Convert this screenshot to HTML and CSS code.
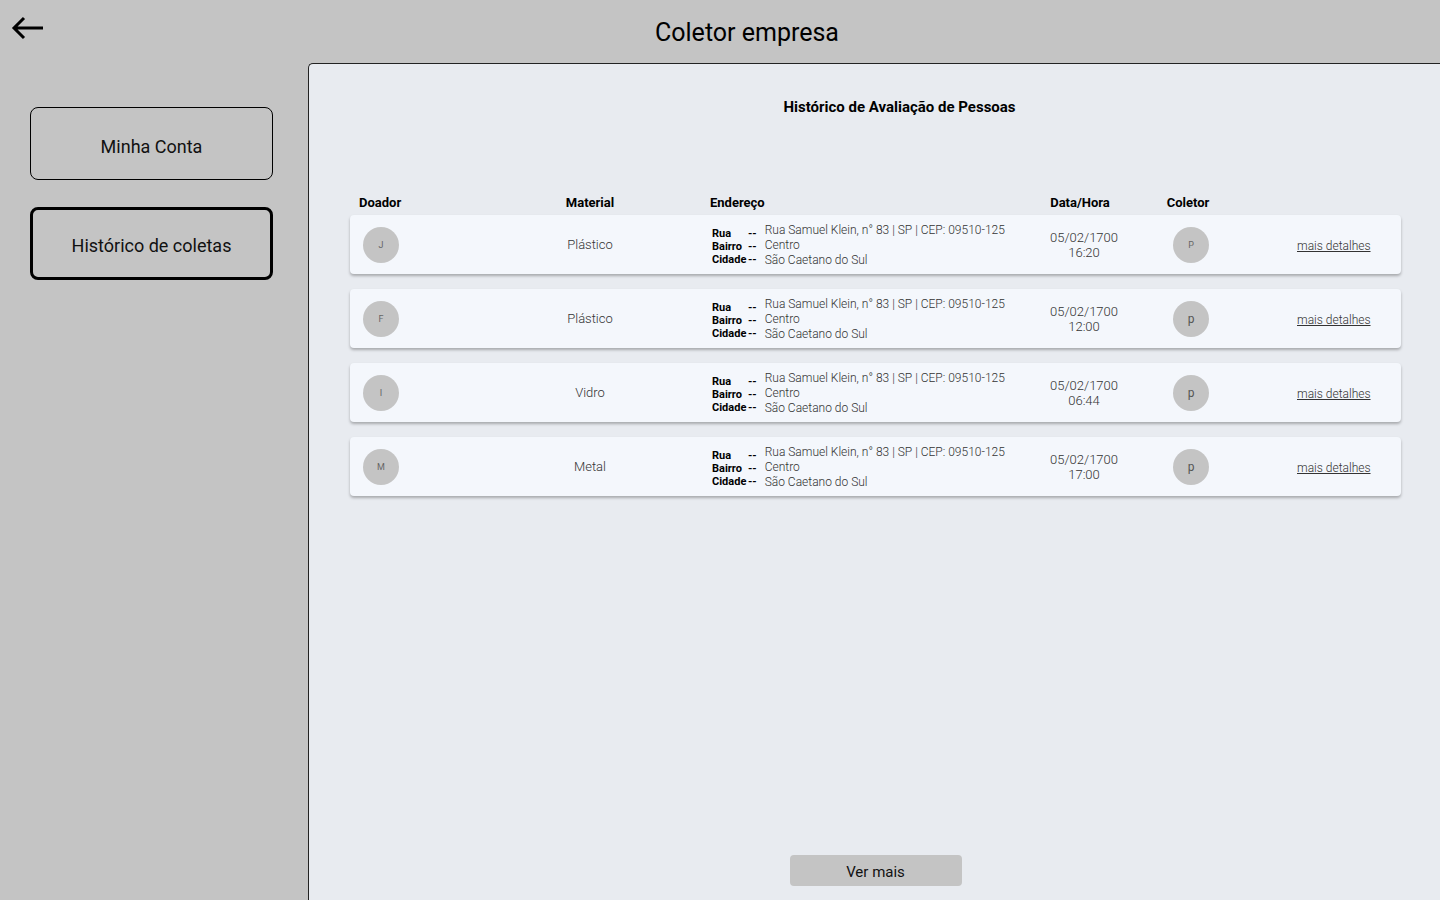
FILE: index.html
```html
<!DOCTYPE html>
<html lang="pt-BR">
<head>
<meta charset="utf-8">
<title>Coletor empresa</title>
<link rel="stylesheet" href="styles.css">
</head>
<body>
<header class="topbar">
  <button class="back" aria-label="Voltar">
    <svg width="34" height="24" viewBox="0 0 34 24"><path d="M32 12H3M13 2L3 12l10 10" fill="none" stroke="#000" stroke-width="3" stroke-linecap="butt" stroke-linejoin="miter"/></svg>
  </button>
  <h1 class="title">Coletor empresa</h1>
</header>
<div class="main">
  <nav class="sidebar">
    <a class="side-btn">Minha Conta</a>
    <a class="side-btn active">Histórico de coletas</a>
  </nav>
  <section class="panel">
    <h2 class="panel-title">Histórico de Avaliação de Pessoas</h2>
    <div class="table">
      <div class="thead">
        <div>Doador</div>
        <div class="c">Material</div>
        <div>Endereço</div>
        <div class="c h-date">Data/Hora</div>
        <div class="c h-col">Coletor</div>
        <div></div>
      </div>
      <div class="rows">
        <div class="row">
          <div><span class="avatar">J</span></div>
          <div class="c mat">Plástico</div>
          <div class="addr">
            <div class="labels"><span>Rua</span><span>--</span><span>Bairro</span><span>--</span><span>Cidade</span><span>--</span></div>
            <div class="vals"><span>Rua Samuel Klein, n° 83 | SP | CEP: 09510-125</span><span>Centro</span><span>São Caetano do Sul</span></div>
          </div>
          <div class="c date">05/02/1700<br>16:20</div>
          <div class="c"><span class="avatar">P</span></div>
          <div><a class="more" href="#"> mais detalhes</a></div>
        </div>
        <div class="row">
          <div><span class="avatar">F</span></div>
          <div class="c mat">Plástico</div>
          <div class="addr">
            <div class="labels"><span>Rua</span><span>--</span><span>Bairro</span><span>--</span><span>Cidade</span><span>--</span></div>
            <div class="vals"><span>Rua Samuel Klein, n° 83 | SP | CEP: 09510-125</span><span>Centro</span><span>São Caetano do Sul</span></div>
          </div>
          <div class="c date">05/02/1700<br>12:00</div>
          <div class="c"><span class="avatar big">p</span></div>
          <div><a class="more" href="#">mais detalhes</a></div>
        </div>
        <div class="row">
          <div><span class="avatar">I</span></div>
          <div class="c mat">Vidro</div>
          <div class="addr">
            <div class="labels"><span>Rua</span><span>--</span><span>Bairro</span><span>--</span><span>Cidade</span><span>--</span></div>
            <div class="vals"><span>Rua Samuel Klein, n° 83 | SP | CEP: 09510-125</span><span>Centro</span><span>São Caetano do Sul</span></div>
          </div>
          <div class="c date">05/02/1700<br>06:44</div>
          <div class="c"><span class="avatar big">p</span></div>
          <div><a class="more" href="#">mais detalhes</a></div>
        </div>
        <div class="row">
          <div><span class="avatar">M</span></div>
          <div class="c mat">Metal</div>
          <div class="addr">
            <div class="labels"><span>Rua</span><span>--</span><span>Bairro</span><span>--</span><span>Cidade</span><span>--</span></div>
            <div class="vals"><span>Rua Samuel Klein, n° 83 | SP | CEP: 09510-125</span><span>Centro</span><span>São Caetano do Sul</span></div>
          </div>
          <div class="c date">05/02/1700<br>17:00</div>
          <div class="c"><span class="avatar big">p</span></div>
          <div><a class="more" href="#">mais detalhes</a></div>
        </div>
      </div>
    </div>
    <button class="ver-mais">Ver mais</button>
  </section>
</div>
</body>
</html>
```
FILE: styles.css
```css
* { box-sizing: border-box; }
html, body { margin: 0; height: 100%; }
body {
  background: #c4c4c4;
  font-family: Roboto, "Noto Sans", sans-serif;
  color: #000;
  overflow: hidden;
}
.topbar {
  height: 63px;
  position: relative;
  display: flex;
  align-items: center;
  justify-content: center;
}
.back {
  position: absolute;
  left: 11px;
  top: 16px;
  background: none;
  border: 0;
  padding: 0;
  width: 34px;
  height: 24px;
  cursor: pointer;
}
.back svg { display: block; }
.title {
  margin: 0 0 0 54px;
  font-size: 25px;
  font-weight: 400;
  line-height: 29px;
  padding-top: 1px;
}
.main {
  display: flex;
  height: 837px;
}
.sidebar {
  width: 308px;
  flex: none;
  padding: 44px 0 0 30px;
  display: flex;
  flex-direction: column;
  gap: 27px;
}
.side-btn {
  width: 243px;
  height: 73px;
  border: 1px solid #000;
  border-radius: 8px;
  display: flex;
  align-items: center;
  justify-content: center;
  font-size: 18px;
  padding-top: 6px;
  color: #111;
}
.side-btn.active {
  border-width: 3px;
  padding-top: 4px;
}
.panel {
  flex: 1;
  background: #e8ebf0;
  border-left: 1px solid #222;
  border-top: 1px solid #222;
  border-top-left-radius: 5px;
  display: flex;
  flex-direction: column;
  align-items: stretch;
  padding: 34px 39px 14px 41px;
}
.panel-title {
  margin: 0;
  padding-left: 48px;
  text-align: center;
  font-size: 15px;
  line-height: 18px;
  font-weight: 700;
}
.table { margin-top: 79px; }
.thead, .row {
  display: grid;
  align-items: center;
}
.thead {
  grid-template-columns: 111px 240px 324px 100px 114px 1fr;
  padding-left: 9px;
  font-size: 13px;
  font-weight: 700;
  line-height: 16px;
  height: 16px;
  margin-bottom: 4px;
}
.thead .h-date { margin-left: -8px; }
.thead .h-col { margin-left: -6px; }
.c { text-align: center; }
.rows {
  display: flex;
  flex-direction: column;
  gap: 15px;
}
.row {
  grid-template-columns: 107px 240px 324px 100px 114px 1fr;
  height: 59px;
  padding-left: 13px;
  background: #f4f7fc;
  border-radius: 4px;
  box-shadow: 0 2px 3px rgba(0, 0, 0, 0.28);
  color: #333;
  font-weight: 300;
}
.avatar {
  display: inline-flex;
  width: 36px;
  height: 36px;
  border-radius: 50%;
  background: #c4c4c4;
  align-items: center;
  justify-content: center;
  font-size: 9px;
  font-weight: 400;
  color: #666;
  vertical-align: middle;
}
.avatar.big { font-size: 12px; color: #555; }
.mat { font-size: 13px; }
.addr {
  display: flex;
  align-items: center;
  gap: 8px;
  padding-left: 2px;
}
.labels {
  display: grid;
  grid-template-columns: 36px auto;
  font-size: 11px;
  font-weight: 700;
  line-height: 13px;
  color: #000;
  padding-top: 3px;
}
.vals {
  display: flex;
  flex-direction: column;
  font-size: 12px;
  line-height: 15px;
  color: #333;
  padding-top: 2px;
}
.date {
  font-size: 13px;
  line-height: 15px;
  color: #333;
}
.more {
  margin-left: 49px;
  font-size: 12px;
  color: #333;
  text-decoration: underline;
}
.ver-mais {
  margin: auto auto 0;
  width: 172px;
  height: 31px;
  border: 0;
  border-radius: 4px;
  background: #c4c4c4;
  font-family: Roboto, sans-serif;
  font-size: 15px;
  color: #111;
  padding-top: 4px;
}
```
